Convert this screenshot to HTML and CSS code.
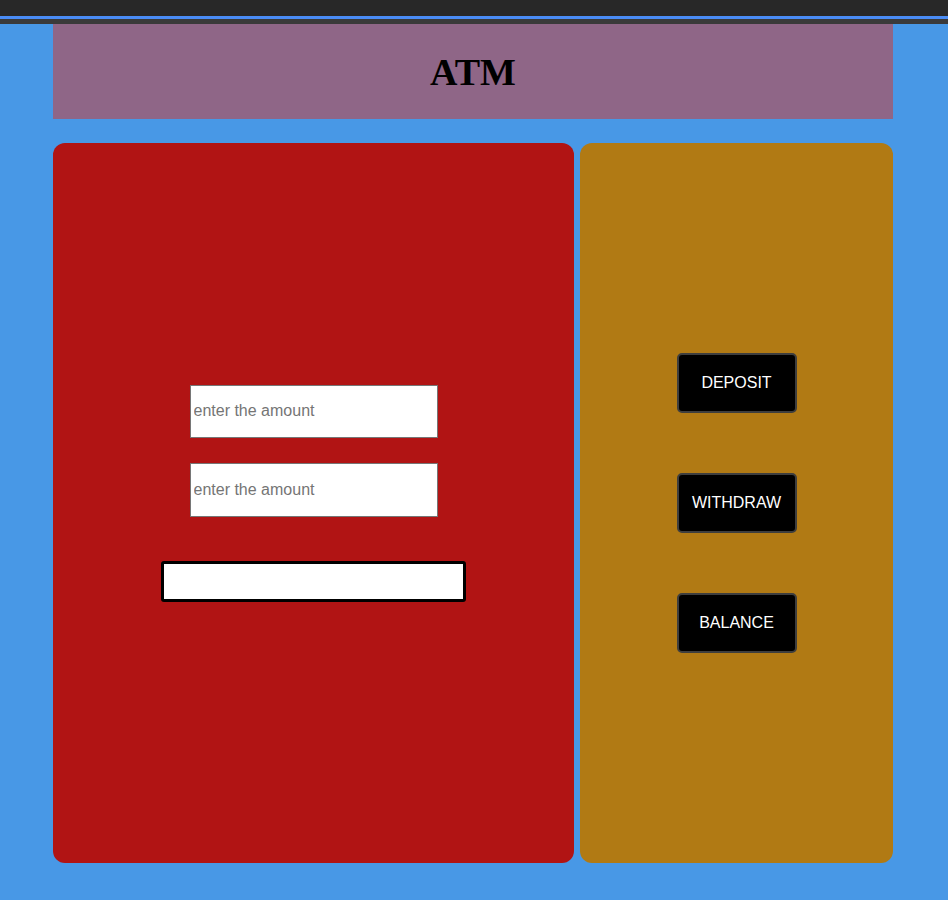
FILE: index.html
```html
<!DOCTYPE html>
<html lang="en">
<head>
<meta charset="utf-8">
<title>ATM</title>
<link rel="stylesheet" href="styles.css">
</head>
<body>
<div class="chrome">
  <div class="chrome-top"></div>
  <div class="chrome-line"></div>
  <div class="chrome-bottom"></div>
</div>
<div class="page">
  <header class="header"><h1 class="title">ATM</h1></header>
  <main class="panels">
    <section class="panel-left">
      <input class="amount" type="text" placeholder="enter the amount">
      <input class="amount" type="text" placeholder="enter the amount">
      <div class="result"></div>
    </section>
    <section class="panel-right">
      <button class="action">DEPOSIT</button>
      <button class="action">WITHDRAW</button>
      <button class="action">BALANCE</button>
    </section>
  </main>
</div>
</body>
</html>
```
FILE: styles.css
```css
html, body {
  margin: 0;
  padding: 0;
}
body {
  background: #4898e6;
  font-family: "Liberation Sans", Arial, sans-serif;
  min-height: 900px;
}
.chrome-top {
  height: 16px;
  background: #282828;
}
.chrome-line {
  height: 3px;
  background: #4a8cf5;
}
.chrome-bottom {
  height: 5px;
  background: #3a3a3a;
}
.page {
  margin-left: 53px;
  width: 840px;
}
.header {
  height: 95px;
  background: #8f6687;
  display: flex;
  align-items: center;
  justify-content: center;
}
.title {
  margin: 0;
  font-family: "Liberation Serif", "Times New Roman", serif;
  font-weight: bold;
  font-size: 38px;
  color: #000;
}
.panels {
  margin-top: 24px;
  display: flex;
  gap: 6px;
  height: 720px;
}
.panel-left {
  width: 521px;
  background: #b11414;
  border-radius: 12px;
  display: flex;
  flex-direction: column;
  align-items: center;
  justify-content: center;
  padding-bottom: 20px;
  box-sizing: border-box;
}
.panel-right {
  flex: 1;
  background: #b17a14;
  border-radius: 12px;
  display: flex;
  flex-direction: column;
  align-items: center;
  justify-content: center;
  gap: 60px;
}
.amount {
  width: 248px;
  height: 53px;
  box-sizing: border-box;
  border: 1px solid #767676;
  background: #fff;
  padding: 0 3px;
  font-family: "Liberation Sans", Arial, sans-serif;
  font-size: 16px;
  color: #000;
  outline: none;
  margin: 0;
}
.amount::placeholder {
  color: #757575;
}
.amount + .amount {
  margin-top: 25px;
  height: 54px;
}
.result {
  margin-top: 44px;
  width: 305px;
  height: 41px;
  box-sizing: border-box;
  border: 3px solid #000;
  border-radius: 3px;
  background: #fff;
}
.action {
  width: 120px;
  height: 60px;
  box-sizing: border-box;
  background: #000;
  color: #fff;
  border: 2px solid #3e3e3e;
  border-radius: 5px;
  font-family: "Liberation Sans", Arial, sans-serif;
  font-size: 16px;
  padding: 0;
  margin: 0;
}
```
